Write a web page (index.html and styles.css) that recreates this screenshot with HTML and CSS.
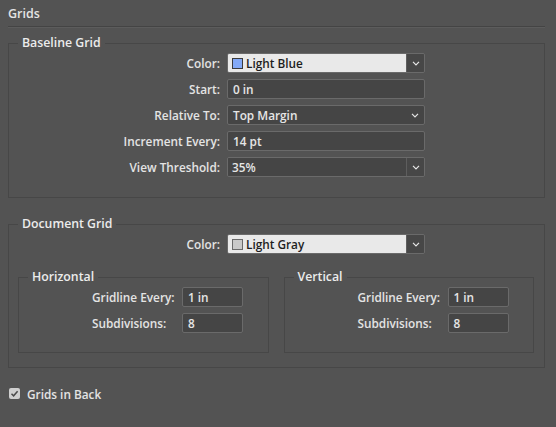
FILE: index.html
```html
<!DOCTYPE html>
<html>
<head>
<meta charset="utf-8">
<link rel="stylesheet" href="styles.css">
</head>
<body>
<div class="dialog">
  <div class="title">Grids</div>

  <fieldset class="group baseline">
    <legend>Baseline Grid</legend>
    <div class="form">
      <label class="lbl">Color:</label>
      <div class="combo">
        <div class="field light"><span class="swatch blue"></span>Light Blue</div>
        <div class="btn"><svg width="8" height="5" viewBox="0 0 8 5"><path d="M1 0.8 L4 3.8 L7 0.8" fill="none" stroke="#e6e6e6" stroke-width="1.2"/></svg></div>
      </div>

      <label class="lbl">Start:</label>
      <div class="input wide">0 in</div>

      <label class="lbl">Relative To:</label>
      <div class="select">
        <span>Top Margin</span>
        <svg width="8" height="5" viewBox="0 0 8 5"><path d="M1 0.8 L4 3.8 L7 0.8" fill="none" stroke="#e6e6e6" stroke-width="1.2"/></svg>
      </div>

      <label class="lbl">Increment Every:</label>
      <div class="input wide">14 pt</div>

      <label class="lbl">View Threshold:</label>
      <div class="combo">
        <div class="field dark">35%</div>
        <div class="btn"><svg width="8" height="5" viewBox="0 0 8 5"><path d="M1 0.8 L4 3.8 L7 0.8" fill="none" stroke="#e6e6e6" stroke-width="1.2"/></svg></div>
      </div>
    </div>
  </fieldset>

  <fieldset class="group document">
    <legend>Document Grid</legend>
    <div class="form">
      <label class="lbl">Color:</label>
      <div class="combo">
        <div class="field light"><span class="swatch gray"></span>Light Gray</div>
        <div class="btn"><svg width="8" height="5" viewBox="0 0 8 5"><path d="M1 0.8 L4 3.8 L7 0.8" fill="none" stroke="#e6e6e6" stroke-width="1.2"/></svg></div>
      </div>
    </div>
    <div class="subs">
      <fieldset class="sub">
        <legend>Horizontal</legend>
        <div class="subform">
          <label class="slbl">Gridline Every:</label>
          <div class="input small">1 in</div>
          <label class="slbl">Subdivisions:</label>
          <div class="input small">8</div>
        </div>
      </fieldset>
      <fieldset class="sub">
        <legend>Vertical</legend>
        <div class="subform">
          <label class="slbl">Gridline Every:</label>
          <div class="input small">1 in</div>
          <label class="slbl">Subdivisions:</label>
          <div class="input small">8</div>
        </div>
      </fieldset>
    </div>
  </fieldset>

  <div class="check">
    <span class="box"><svg width="11" height="11" viewBox="0 0 11 11"><path d="M2.5 5.8 L4.6 7.8 L8.6 3.2" fill="none" stroke="#4a4a4a" stroke-width="1.5"/></svg></span>
    <span>Grids in Back</span>
  </div>
</div>
</body>
</html>
```

FILE: styles.css
```css
html, body {
  margin: 0;
  padding: 0;
  background: #535353;
}
body {
  width: 556px;
  height: 427px;
  overflow: hidden;
  font-family: "Open Sans", "DejaVu Sans", sans-serif;
  font-weight: 600;
  font-size: 11.8px;
  color: #e4e4e4;
}
.dialog {
  padding: 0 11px 0 8px;
}
.title {
  padding: 6px 0 4px 0;
  line-height: 16px;
  font-size: 12.5px;
  border-bottom: 1px solid #444444;
  box-shadow: 0 1px 0 #5c5c5c;
}
.group {
  margin: 9px 0 0 0;
  padding: 3px 0 20px 0;
  border: 1px solid #474747;
  min-inline-size: 0;
}
.group > legend, .sub > legend {
  margin-left: 9px;
  padding: 0 4px;
  line-height: 14px;
  font-size: 12.3px;
  color: #ececec;
}
.document {
  margin-top: 19px;
  padding-bottom: 14px;
}
.form {
  display: grid;
  grid-template-columns: 211px 198px;
  column-gap: 7px;
  row-gap: 6px;
}
.lbl {
  text-align: right;
  line-height: 20px;
}
.combo {
  display: flex;
  height: 20px;
  border: 1px solid #6a6a6a;
  border-radius: 2px;
  box-sizing: border-box;
  overflow: hidden;
}
.field {
  flex: 1;
  display: flex;
  align-items: center;
  padding-left: 4px;
  line-height: 18px;
}
.field.light {
  background: #e9e9e9;
  color: #1e1e1e;
}
.field.dark {
  background: #454545;
  color: #e6e6e6;
}
.btn {
  width: 17px;
  background: #474747;
  border-left: 1px solid #5e5e5e;
  display: flex;
  align-items: center;
  justify-content: center;
}
.swatch {
  width: 11px;
  height: 11px;
  box-sizing: border-box;
  border: 1px solid #3b3b3b;
  margin-right: 3px;
}
.swatch.blue { background: #83a9f7; }
.swatch.gray { background: #c9c9c9; border-color: #6a6a6a; }
.input, .select {
  height: 20px;
  box-sizing: border-box;
  border: 1px solid #6a6a6a;
  border-radius: 2px;
  background: #454545;
  color: #e6e6e6;
  padding-left: 5px;
  line-height: 18px;
}
.select {
  display: flex;
  align-items: center;
  justify-content: space-between;
  padding-right: 5px;
}
.subs {
  display: grid;
  grid-template-columns: 1fr 1fr;
  column-gap: 15px;
  margin: 16px 10px 0 9px;
}
.sub {
  margin: 0;
  padding: 3px 0 19px 0;
  border: 1px solid #474747;
  min-inline-size: 0;
}
.subform {
  display: grid;
  grid-template-columns: 90px 61px;
  row-gap: 6px;
  margin-left: 73px;
}
.slbl {
  line-height: 20px;
}
.input.small {
  width: 61px;
}
.check {
  display: flex;
  align-items: center;
  margin-top: 20px;
  margin-left: 1px;
  height: 11px;
}
.box {
  width: 11px;
  height: 11px;
  background: #cfcfcf;
  border-radius: 2px;
  margin-right: 7px;
  display: flex;
}
```
